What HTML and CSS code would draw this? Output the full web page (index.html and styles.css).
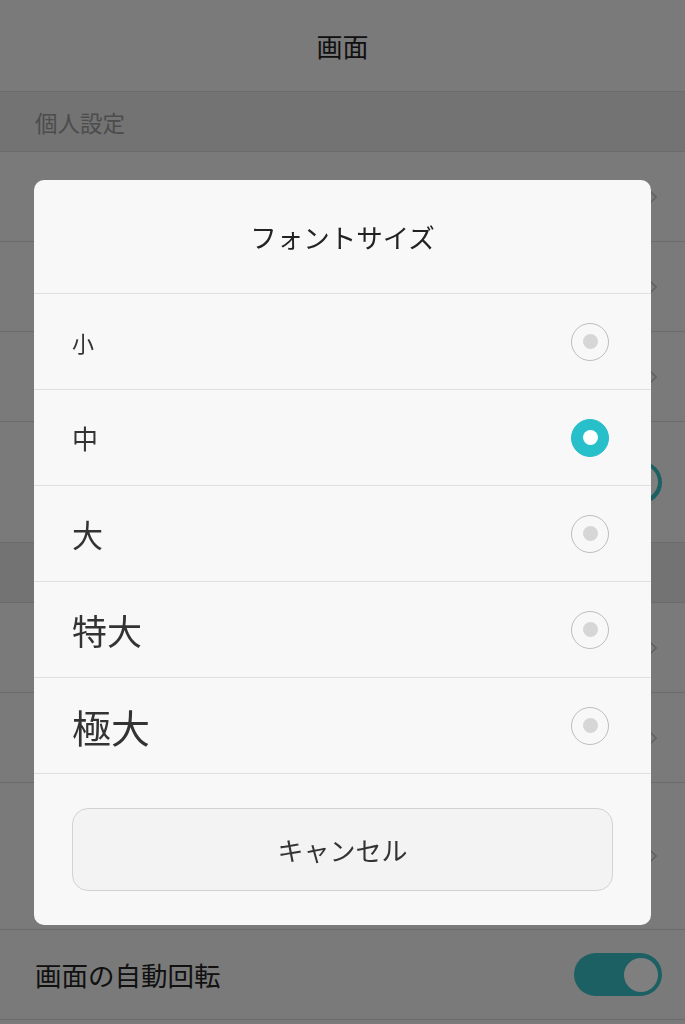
FILE: index.html
```html
<!DOCTYPE html>
<html lang="ja">
<head>
    <meta charset="UTF-8">
    <meta name="viewport" content="width=device-width, initial-scale=1.0">
    <title>画面</title>
    <link rel="stylesheet" href="styles.css">
</head>
<body>

<div class="page">
    <div class="topbar">画面</div>

    <div class="section">個人設定</div>
    <div class="row"><span></span><svg class="chev" viewBox="0 0 8 14"><path d="M1 1l6 6-6 6"/></svg></div>
    <div class="row"><span></span><svg class="chev" viewBox="0 0 8 14"><path d="M1 1l6 6-6 6"/></svg></div>
    <div class="row"><span></span><svg class="chev" viewBox="0 0 8 14"><path d="M1 1l6 6-6 6"/></svg></div>
    <div class="row tall"><span></span><div class="toggle on"><div class="knob"></div></div></div>

    <div class="section"></div>
    <div class="row"><span></span><svg class="chev" viewBox="0 0 8 14"><path d="M1 1l6 6-6 6"/></svg></div>
    <div class="row"><span></span><svg class="chev" viewBox="0 0 8 14"><path d="M1 1l6 6-6 6"/></svg></div>
    <div class="row taller"><span></span><svg class="chev" viewBox="0 0 8 14"><path d="M1 1l6 6-6 6"/></svg></div>
    <div class="row"><span>画面の自動回転</span><div class="toggle on"><div class="knob"></div></div></div>
    <div class="row"></div>
</div>

<div class="overlay"></div>

<div class="dialog">
    <div class="dlg-title">フォントサイズ</div>
    <div class="opt"><span class="s1">小</span><span class="radio"></span></div>
    <div class="opt"><span class="s2">中</span><span class="radio checked"></span></div>
    <div class="opt"><span class="s3">大</span><span class="radio"></span></div>
    <div class="opt"><span class="s4">特大</span><span class="radio"></span></div>
    <div class="opt"><span class="s5">極大</span><span class="radio"></span></div>
    <div class="dlg-foot">
        <button class="cancel">キャンセル</button>
    </div>
</div>

</body>
</html>
```

FILE: styles.css
```css
body {
    margin: 0;
    font-family: "Noto Sans CJK JP", "Noto Sans", sans-serif;
    background: #f4f4f4;
    color: #222;
}
.page {
    display: flex;
    flex-direction: column;
}
.topbar {
    height: 91px;
    border-bottom: 1px solid #d6d6d6;
    display: flex;
    align-items: center;
    justify-content: center;
    font-size: 26px;
}
.section {
    height: 59px;
    border-bottom: 1px solid #d6d6d6;
    background: #e6e6e6;
    color: #999;
    font-size: 22.5px;
    display: flex;
    align-items: center;
    padding-left: 35px;
}
.row {
    height: 89px;
    border-bottom: 1px solid #d6d6d6;
    display: flex;
    align-items: center;
    justify-content: space-between;
    padding: 0 23px 0 35px;
    font-size: 26.5px;
}
.row.tall { height: 120px; }
.row.taller { height: 146px; }
.chev {
    width: 8px;
    height: 14px;
    margin-right: 5px;
    fill: none;
    stroke: #c4c4c4;
    stroke-width: 1.6;
}
.toggle {
    width: 88px;
    height: 43px;
    border-radius: 22px;
    background: #ccc;
    display: flex;
    align-items: center;
    padding: 0 4px;
    box-sizing: border-box;
}
.toggle.on {
    background: #38c0c6;
    justify-content: flex-end;
}
.knob {
    width: 34px;
    height: 34px;
    border-radius: 50%;
    background: #fff;
}
.overlay {
    position: fixed;
    top: 0; left: 0; width: 100%; height: 100%;
    background-color: rgba(0, 0, 0, 0.5);
}
.dialog {
    position: fixed;
    top: 180px;
    left: 34px;
    width: 617px;
    background: #f8f8f8;
    border-radius: 10px;
    overflow: hidden;
}
.dlg-title {
    height: 113px;
    border-bottom: 1px solid #e0e0e0;
    display: flex;
    align-items: center;
    justify-content: center;
    font-size: 26.5px;
    color: #222;
}
.opt {
    height: 95px;
    border-bottom: 1px solid #e0e0e0;
    display: flex;
    align-items: center;
    justify-content: space-between;
    padding: 0 42px 0 38px;
    color: #333;
}
.s1 { font-size: 22px; }
.s2 { font-size: 26px; }
.s3 { font-size: 31px; }
.s4 { font-size: 35px; }
.s5 { font-size: 39px; }
.radio {
    width: 38px;
    height: 38px;
    border-radius: 50%;
    border: 1.5px solid #bdbdbd;
    box-sizing: border-box;
    display: flex;
    align-items: center;
    justify-content: center;
}
.radio::after {
    content: "";
    width: 15px;
    height: 15px;
    border-radius: 50%;
    background: #d6d6d6;
}
.radio.checked {
    background: #27bfc9;
    border-color: #27bfc9;
}
.radio.checked::after {
    background: #fff;
}
.dlg-foot {
    padding: 34px 38px 34px;
}
.cancel {
    display: block;
    width: 100%;
    height: 83px;
    border: 1px solid #d2d2d2;
    border-radius: 16px;
    background: #f3f3f3;
    font-family: inherit;
    font-size: 26px;
    color: #333;
}
```
